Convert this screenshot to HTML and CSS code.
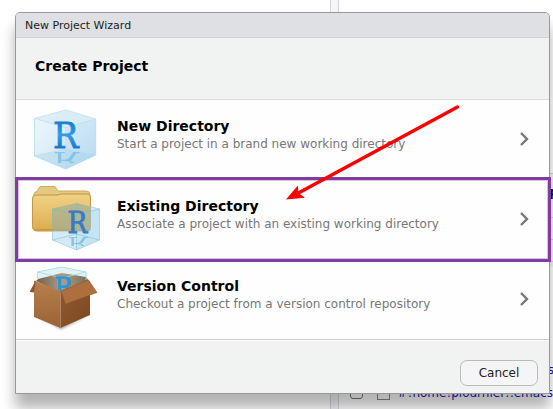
FILE: index.html
```html
<!DOCTYPE html>
<html lang="en">
<head>
<meta charset="utf-8">
<title>New Project Wizard</title>
<link rel="stylesheet" href="styles.css">
</head>
<body>
<div class="desktop">
  <div class="backdrop">
    <div class="splitter"></div>
    <div class="pane">
      <div class="pane-top"></div>
      <div class="pane-lines"><b>p</b></div>
      <div class="files">
        <div class="file last-only">s</div>
        <div class="file"><i class="check"></i><i class="doc"></i><span>#!home!plournier!.emacs</span></div>
        <div class="file"><i class="check"></i><i class="doc"></i></div>
      </div>
    </div>
  </div>

  <main class="dialog">
    <header class="titlebar">New Project Wizard</header>
    <h1 class="heading">Create Project</h1>
    <div class="options">
      <section class="option">
        <svg class="icon" width="74" height="80" viewBox="0 0 74 80">
          <defs>
            <linearGradient id="ice" x1="0" y1="0" x2="1" y2="1"><stop offset="0" stop-color="#f0f8fc"/><stop offset=".55" stop-color="#d8ecf7"/><stop offset="1" stop-color="#b4daf0"/></linearGradient>
            <linearGradient id="ink" x1="0" y1="0" x2="0" y2="1"><stop offset="0" stop-color="#0866bd"/><stop offset=".5" stop-color="#2d9ee9"/><stop offset="1" stop-color="#0864ba"/></linearGradient>
            <clipPath id="reflect"><path d="M15 52H55V64H15Z"/></clipPath>
          </defs>
          <path d="M35.700 11 65.700 20V56L35.700 70 4.500 57V19.500Z" fill="url(#ice)" stroke="#b5dbea" stroke-width=".8"/>
          <path d="M35.700 11 65.700 20 35.700 28.500 4.500 19.500Z" fill="#d3ebf5" opacity=".6"/>
          <path d="M35.700 28.500 65.700 20V56L35.700 70Z" fill="#b8dcf2" opacity=".4"/>
          <path d="M4.500 57 35.700 50 65.700 56 35.700 70Z" fill="#a4d1eb" opacity=".4"/>
          <path d="M4.500 19.500 35.700 28.500 65.700 20M35.700 28.500V70M4.500 57 35.700 50 65.700 56" fill="none" stroke="#b9dde9" stroke-width=".7"/>
          <text class="logo" x="23" y="48.500" textLength="25.500" lengthAdjust="spacingAndGlyphs" font-size="36" fill="url(#ink)" stroke="url(#ink)">R</text>
          <g clip-path="url(#reflect)" opacity=".45"><text class="logo" transform="translate(23 52.500) scale(1 -.65)" textLength="25.500" lengthAdjust="spacingAndGlyphs" font-size="36" fill="#40a7df">R</text></g>
        </svg>
        <div class="copy"><h2>New Directory</h2><p>Start a project in a brand new working directory</p></div>
        <svg class="chevron" width="12" height="16" viewBox="0 0 12 16"><path d="M2 2 8 8 2 14"/></svg>
      </section>
      <section class="option">
        <svg class="icon" width="74" height="80" viewBox="0 0 74 80">
          <defs>
            <linearGradient id="folder" x1="0" y1="0" x2="0" y2="1"><stop offset="0" stop-color="#f0d186"/><stop offset=".5" stop-color="#e8c06a"/><stop offset="1" stop-color="#dcab48"/></linearGradient>
            <clipPath id="reflect2"><path d="M25 57H62V67H25Z"/></clipPath>
          </defs>
          <path d="M4 18V15Q4 13 7 12.500L10 7.500H25L28 12H56Q60 12 60 16V20H4Z" fill="#e6c981" stroke="#c79d4e" stroke-width=".8"/>
          <path d="M2.500 19Q2.500 16 6 16H27L31 15H57Q60.500 15 60.500 18V48Q60.500 52 56.500 52H7Q2.500 52 2.500 47.500Z" fill="url(#folder)" stroke="#bb8d3e" stroke-width=".9"/>
          <path d="M5 50.500H58" stroke="#b57d27" opacity=".45"/>
          <path d="M22.500 30 46.500 24.500 69.500 30V61L46.500 71 22.500 61Z" fill="#a8d8f2" opacity=".5"/>
          <path d="M22.500 30 46.500 24.500 60.500 28V52H22.500Z" fill="#9b914f" opacity=".38"/>
          <path d="M46.500 36 69.500 30V61L46.500 71Z" fill="#92cced" opacity=".2"/>
          <path d="M22.500 30 46.500 24.500 69.500 30V61L46.500 71 22.500 61ZM22.500 30 46.500 36 69.500 30M46.500 24.500V71M22.500 61 46.500 55 69.500 61" fill="none" stroke="#6dbbc0" stroke-width=".8" opacity=".6"/>
          <text class="logo" x="37.500" y="54" textLength="19.800" lengthAdjust="spacingAndGlyphs" font-size="29" fill="#3f78c2" stroke="#3f78c2">R</text>
          <g clip-path="url(#reflect2)" opacity=".4"><text class="logo" transform="translate(37.500 57.500) scale(1 -.65)" textLength="19.800" lengthAdjust="spacingAndGlyphs" font-size="29" fill="#2d87ce">R</text></g>
        </svg>
        <div class="copy"><h2>Existing Directory</h2><p>Associate a project with an existing working directory</p></div>
        <svg class="chevron" width="12" height="16" viewBox="0 0 12 16"><path d="M2 2 8 8 2 14"/></svg>
      </section>
      <section class="option">
        <svg class="icon" width="74" height="80" viewBox="0 0 74 80">
          <defs>
            <linearGradient id="left" x1="0" y1="0" x2="0" y2="1"><stop offset="0" stop-color="#b9804d"/><stop offset="1" stop-color="#9b6235"/></linearGradient>
            <linearGradient id="right" x1="0" y1="0" x2="1" y2="1"><stop offset="0" stop-color="#94592e"/><stop offset="1" stop-color="#7b4822"/></linearGradient>
            <linearGradient id="inside"><stop offset="0" stop-color="#75604a"/><stop offset=".5" stop-color="#ab9e87"/><stop offset="1" stop-color="#756a55"/></linearGradient>
            <clipPath id="boxmouth"><path d="M0 0H74V22L58 22 30.500 32 4 22Z"/></clipPath>
            <filter id="soft"><feGaussianBlur stdDeviation="1"/></filter>
          </defs>
          <path d="M5 57 30 68 60 56 31 70.500Z" fill="#555" opacity=".5" filter="url(#soft)"/>
          <path d="M7.500 13 32 8 56 13V21L32 23 7.500 21Z" fill="#e2f2f7"/>
          <path d="M6 22 8 20 32 14 56 18 59 22 30.500 34Z" fill="url(#inside)"/>
          <path d="M7.500 13 32 19 56 13M7.500 21V13L32 8 56 13V21" fill="none" stroke="#a8dae6" stroke-width=".9"/>
          <g clip-path="url(#boxmouth)"><text class="logo" x="24.500" y="37" textLength="18" lengthAdjust="spacingAndGlyphs" font-size="26" fill="#2895df" stroke="#2895df">R</text></g>
          <path d="M4 21.500 30.500 32V69L4 58Z" fill="url(#left)"/>
          <path d="M30.500 32 60 22V56L30.500 69Z" fill="url(#right)"/>
          <path d="M6 21 -.500 33 4 33.500Z" fill="#8c5833"/>
          <path d="M31 32 58.500 21 67 33.500 35.500 45Z" fill="#ad6f3d" stroke="#94592d" stroke-width=".6"/>
        </svg>
        <div class="copy"><h2>Version Control</h2><p>Checkout a project from a version control repository</p></div>
        <svg class="chevron" width="12" height="16" viewBox="0 0 12 16"><path d="M2 2 8 8 2 14"/></svg>
      </section>
    </div>
    <footer class="actions"><button>Cancel</button></footer>
  </main>

  <div class="highlight"></div>
  <svg class="arrow" width="553" height="409" viewBox="0 0 553 409"><path d="M457.500 107 297 193.800" stroke="#f00" stroke-width="3.500" stroke-linecap="round"/><path d="M286 199.500 297.800 185.500 298.500 193 305 197.700Z" fill="#f00"/></svg>
</div>
</body>
</html>
```
FILE: styles.css
```css
* { box-sizing: border-box; }
body { margin: 0; font-family: "DejaVu Sans", sans-serif; }
h1, h2, p { margin: 0; }
.desktop { position: relative; width: 553px; height: 409px; overflow: hidden; padding: 12px 0 0 15px; background: #fff; }
.backdrop { position: absolute; inset: 0; display: flex; padding-left: 330px; overflow: hidden; }
.splitter { width: 9px; border: solid #d4d5d9; border-width: 0 1px; background: #f4f5f8; }
.pane { flex: 1; display: flex; flex-direction: column; }
.pane > * { flex-shrink: 0; }
.pane-top { height: 173px; }
.pane-lines { height: 94px; padding-top: 9px; text-align: right; font-size: 12px; line-height: 20px; background: repeating-linear-gradient(#d0d3d8 0 1px, #f4f5f7 1px 22px); }
.pane-lines b { margin-right: -5px; }
.files { padding-top: 91px; font-size: 12px; color: #1a10b5; }
.file { display: flex; align-items: center; height: 23px; padding-left: 11px; }
.file span { margin-left: 8px; white-space: nowrap; }
.last-only { justify-content: flex-end; margin-right: -1px; }
.check { flex: none; width: 13px; height: 13px; border: 1px solid #777; border-radius: 3px; }
.doc { flex: none; width: 13px; height: 14px; margin-left: 14px; border: 1px solid #888; }
.dialog { position: relative; display: flex; flex-direction: column; width: 535px; height: 382px; border: 1px solid #969999; border-radius: 5px 5px 0 0; background: #f1f3f3; box-shadow: 0 14px 14px rgba(0,0,0,.3); overflow: hidden; }
.titlebar { height: 25px; padding-left: 9px; border-bottom: 1px solid #d0d2d5; background: #dfe0e4; color: #222; font-size: 11px; line-height: 25px; }
.heading { height: 62px; padding-left: 19px; border-bottom: 1px solid #dadddd; font-size: 14px; line-height: 56px; }
.options { height: 240px; background: #fefefe; border-bottom: 1px solid #ccc; box-shadow: 0 1px #fff; }
.option { display: flex; align-items: center; height: 80px; padding: 0 18px 0 14px; }
.option:first-child { margin-top: -1px; }
.copy { flex: 1; margin-left: 13px; padding-bottom: 9px; }
h2 { font-size: 14px; line-height: 18px; color: #000; }
p { font-size: 12px; line-height: 18px; color: #777; white-space: nowrap; }
.chevron { fill: none; stroke: #777; stroke-width: 2.4; }
.logo { font-family: "DejaVu Serif", serif; stroke-width: .8px; }
.actions { flex: 1; display: flex; align-items: flex-end; justify-content: flex-end; padding: 0 11px 7px; }
button { width: 78px; height: 26px; padding: 0; border: 1px solid #b9babc; border-radius: 7px; background: #f5f5f8; color: #222; font: 12px "DejaVu Sans", sans-serif; }
.highlight { position: absolute; left: 15px; top: 177px; width: 536px; height: 85px; border: 3px solid #803d9f; box-shadow: inset 0 0 0 1px #d9c2e5; }
.arrow { position: absolute; inset: 0; }
```
